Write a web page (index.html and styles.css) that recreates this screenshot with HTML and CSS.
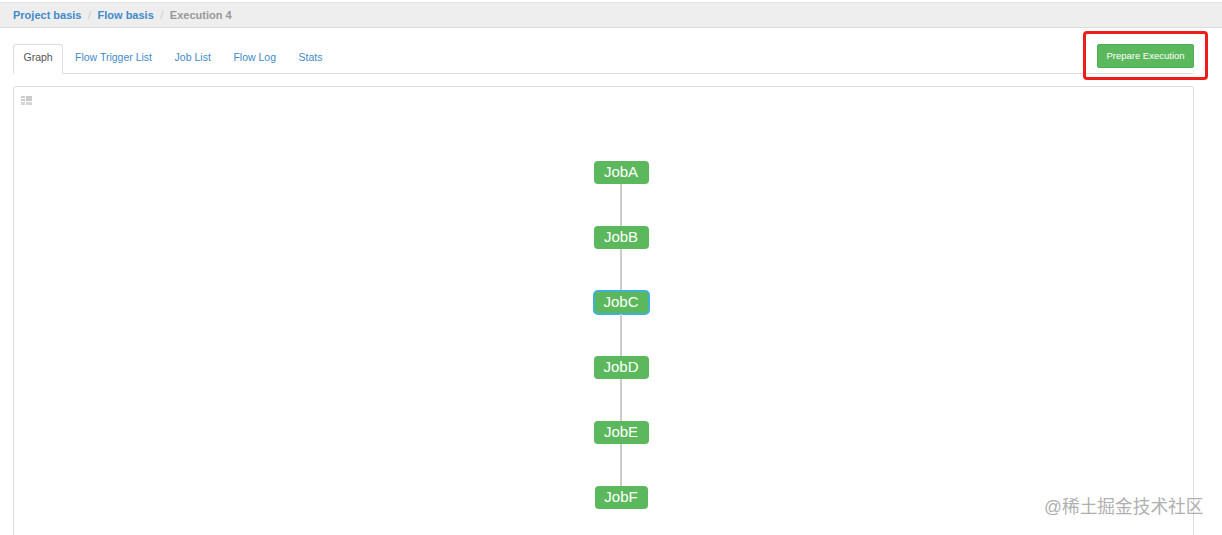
FILE: index.html
```html
<!DOCTYPE html>
<html lang="zh">
<head>
  <meta charset="UTF-8">
  <title>Execution 4</title>
  <link rel="stylesheet" href="styles.css">
</head>
<body>
  <div class="crumbs">
    <a href="#">Project basis</a>
    <span class="sep">/</span>
    <a href="#">Flow basis</a>
    <span class="sep">/</span>
    <span class="current">Execution 4</span>
  </div>

  <div class="content">
    <div class="tabs">
      <a class="tab active" href="#">Graph</a>
      <a class="tab" href="#">Flow Trigger List</a>
      <a class="tab" href="#">Job List</a>
      <a class="tab" href="#">Flow Log</a>
      <a class="tab" href="#">Stats</a>
      <button class="btn-prepare">Prepare Execution</button>
    </div>

    <div class="graph">
      <svg class="grid-icon" width="11" height="9" viewBox="0 0 11 9">
        <path fill="#ccc" d="M0 0h4v2H0zM0 3h4v2H0zM5 0h6v5H5z"/>
        <path fill="#d6d6d6" d="M0 6h4v3H0zM5 6h6v3H5z"/>
      </svg>
      <div class="flow">
        <div class="node">JobA</div>
        <div class="link"></div>
        <div class="node">JobB</div>
        <div class="link"></div>
        <div class="node selected">JobC</div>
        <div class="link"></div>
        <div class="node">JobD</div>
        <div class="link"></div>
        <div class="node">JobE</div>
        <div class="link"></div>
        <div class="node narrow">JobF</div>
      </div>
    </div>
  </div>

  <div class="highlight"></div>
  <div class="watermark">@稀土掘金技术社区</div>
</body>
</html>
```

FILE: styles.css
```css
html, body {
  height: 535px;
  overflow: hidden;
}
body {
  margin: 0;
  padding-top: 2px;
  box-sizing: border-box;
  background-color: #fff;
  color: #333;
  font-family: "Liberation Sans", sans-serif;
  position: relative;
}
a {
  color: #428bca;
  text-decoration: none;
}
.crumbs {
  height: 26px;
  box-sizing: border-box;
  padding-left: 13px;
  display: flex;
  align-items: center;
  gap: 6.5px;
  background-color: #eee;
  border-top: 1px solid #e2e2e2;
  border-bottom: 1px solid #ddd;
  font-size: 11px;
  font-weight: bold;
}
.crumbs .sep {
  color: #ccc;
  font-weight: normal;
}
.crumbs .current {
  color: #999;
}
.content {
  padding: 16px 28px 0 13px;
}
.tabs {
  height: 30px;
  box-sizing: border-box;
  display: flex;
  border-bottom: 1px solid #ddd;
  font-size: 10.5px;
}
.tab {
  height: 30px;
  box-sizing: border-box;
  margin-right: 1px;
  padding: 0 9.8px 5px;
  display: flex;
  align-items: center;
  border: 1px solid transparent;
  border-radius: 3px 3px 0 0;
}
.tab.active {
  padding: 0 9.5px 5px;
  color: #555;
  background-color: #fff;
  border-color: #ddd #ddd #fff;
}
.btn-prepare {
  margin-left: auto;
  height: 24px;
  width: 97px;
  padding: 0 0 2px;
  background-color: #5cb85c;
  border: 1px solid #4cae4c;
  border-radius: 2px;
  color: #fff;
  font-family: inherit;
  font-size: 9.5px;
}
.graph {
  margin-top: 12px;
  height: 470px;
  box-sizing: border-box;
  padding: 9px 7px 0;
  border: 1px solid #ddd;
  border-radius: 3px;
}
.grid-icon {
  display: block;
}
.flow {
  margin: 56px 0 0 35px;
  display: flex;
  flex-direction: column;
  align-items: center;
}
.node {
  width: 55px;
  height: 23px;
  box-sizing: border-box;
  padding-bottom: 2px;
  display: flex;
  align-items: center;
  justify-content: center;
  background-color: #5cb85c;
  border-radius: 4px;
  color: #fff;
  font-size: 15px;
}
.node.selected {
  width: 57px;
  height: 25px;
  margin: -1px 0;
  padding-bottom: 2px;
  border: 2px solid #3fb0d8;
  border-radius: 5px;
}
.node.narrow {
  width: 53px;
}
.link {
  width: 2px;
  height: 42px;
  background-color: #ccc;
}
/* annotation and watermark sit on top of the screenshot */
.highlight {
  position: absolute;
  left: 1083px;
  top: 31px;
  width: 125px;
  height: 49px;
  box-sizing: border-box;
  border: 3px solid #ee1c1c;
  border-radius: 4px;
}
.watermark {
  position: absolute;
  left: 1044px;
  top: 497px;
  color: #b0b0b0;
  font-family: "Liberation Sans", "Noto Sans CJK SC", sans-serif;
  font-size: 17.7px;
  line-height: 21px;
  white-space: nowrap;
}
```
